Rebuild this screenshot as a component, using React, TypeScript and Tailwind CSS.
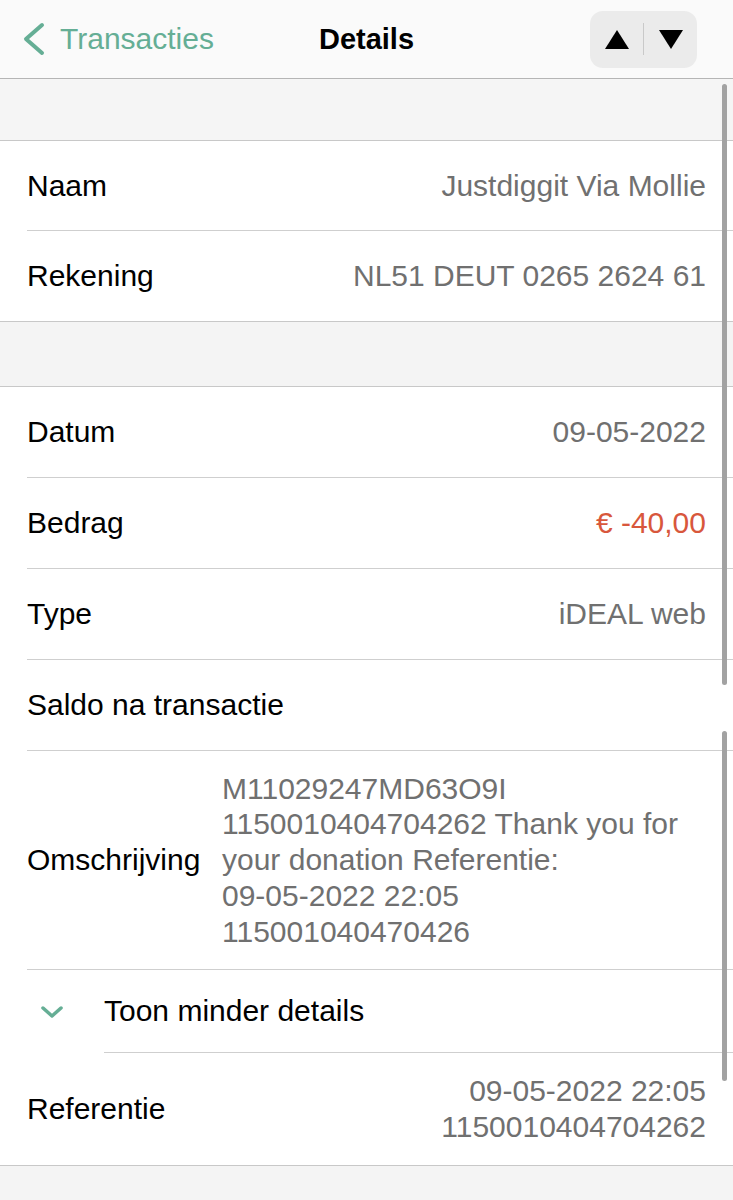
import React from "react";

const font = "font-['Liberation_Sans',Arial,sans-serif]";

function Row({
  label,
  value,
  valueClass = "text-[#707070]",
  last = false,
  h = "h-[91px]",
}: {
  label: string;
  value?: React.ReactNode;
  valueClass?: string;
  last?: boolean;
  h?: string;
}) {
  return (
    <div className="pl-[27px] bg-white">
      <div
        className={`${h} pr-[27px] flex items-center justify-between ${
          last ? "" : "border-b border-[#cfcfcf]"
        }`}
      >
        <span className="text-[30px] text-black leading-none">{label}</span>
        {value !== undefined && (
          <span className={`text-[30px] leading-none ${valueClass}`}>{value}</span>
        )}
      </div>
    </div>
  );
}

export default function App() {
  return (
    <div className={`${font} relative w-[733px] h-[1200px] overflow-hidden bg-[#f4f4f4]`}>
      {/* Header */}
      <div className="h-[79px] bg-[#fafafa] border-b border-[#b5b5b5] grid grid-cols-[1fr_auto_1fr] items-center">
        <div className="flex items-center pl-[22px]">
          <svg width="24" height="34" viewBox="0 0 24 34" className="mr-[14px]">
            <polyline
              points="20,3 4,17 20,31"
              fill="none"
              stroke="#65ae95"
              strokeWidth="4"
              strokeLinecap="round"
              strokeLinejoin="round"
            />
          </svg>
          <span className="text-[30px] text-[#65ae95] leading-none">Transacties</span>
        </div>
        <div className="text-[29px] font-bold text-black leading-none">Details</div>
        <div className="flex justify-end pr-[36px]">
          <div className="w-[107px] h-[57px] rounded-[13px] bg-[#ebebeb] flex items-center">
            <div className="flex-1 flex justify-center">
              <svg width="24" height="19" viewBox="0 0 24 19">
                <polygon points="12,0 24,19 0,19" fill="#000" />
              </svg>
            </div>
            <div className="w-px h-[32px] bg-[#c9c9c9]" />
            <div className="flex-1 flex justify-center">
              <svg width="24" height="19" viewBox="0 0 24 19">
                <polygon points="0,0 24,0 12,19" fill="#000" />
              </svg>
            </div>
          </div>
        </div>
      </div>

      {/* Gray band */}
      <div className="h-[62px] bg-[#f5f5f5] border-b border-[#c8c8c8]" />

      {/* Section 1 */}
      <div className="bg-white border-b border-[#c8c8c8]">
        <Row label="Naam" value="Justdiggit Via Mollie" h="h-[90px]" />
        <Row label="Rekening" value="NL51 DEUT 0265 2624 61" last h="h-[90px]" />
      </div>

      {/* Gray band */}
      <div className="h-[65px] bg-[#f4f4f4] border-b border-[#c8c8c8]" />

      {/* Section 2 */}
      <div className="bg-white border-b border-[#c8c8c8]">
        <Row label="Datum" value="09-05-2022" />
        <Row label="Bedrag" value="€ -40,00" valueClass="text-[#d8573c]" />
        <Row label="Type" value="iDEAL web" />
        <Row label="Saldo na transactie" />
        <div className="pl-[27px] bg-white">
          <div className="h-[219px] border-b border-[#cfcfcf] flex items-center pr-[27px]">
            <span className="text-[30px] text-black leading-none w-[195px] shrink-0">
              Omschrijving
            </span>
            <div className="text-[30px] leading-[35.8px] text-[#707070]">
              <div>M11029247MD63O9I</div>
              <div>1150010404704262 Thank you for</div>
              <div>your donation Referentie:</div>
              <div>09-05-2022 22:05</div>
              <div>115001040470426</div>
            </div>
          </div>
        </div>
        <div className="bg-white flex">
          <div className="w-[104px] shrink-0 flex items-center justify-center">
            <svg width="24" height="14" viewBox="0 0 24 14">
              <polyline
                points="3,3 12,11 21,3"
                fill="none"
                stroke="#65ae95"
                strokeWidth="3.5"
                strokeLinecap="round"
                strokeLinejoin="round"
              />
            </svg>
          </div>
          <div className="flex-1 h-[83px] border-b border-[#cfcfcf] flex items-center">
            <span className="text-[30px] text-black leading-none">Toon minder details</span>
          </div>
        </div>
        <div className="pl-[27px] bg-white">
          <div className="h-[112px] pr-[27px] flex items-center justify-between">
            <span className="text-[30px] text-black leading-none">Referentie</span>
            <div className="text-[30px] leading-[36px] text-[#707070] text-right">
              <div>09-05-2022 22:05</div>
              <div>1150010404704262</div>
            </div>
          </div>
        </div>
      </div>

      {/* Scroll indicators (overlay) */}
      <div className="absolute left-[722px] top-[84px] w-[5px] h-[601px] rounded-full bg-[#a2a2a2]" />
      <div className="absolute left-[722px] top-[731px] w-[5px] h-[350px] rounded-full bg-[#a2a2a2]" />
    </div>
  );
}
